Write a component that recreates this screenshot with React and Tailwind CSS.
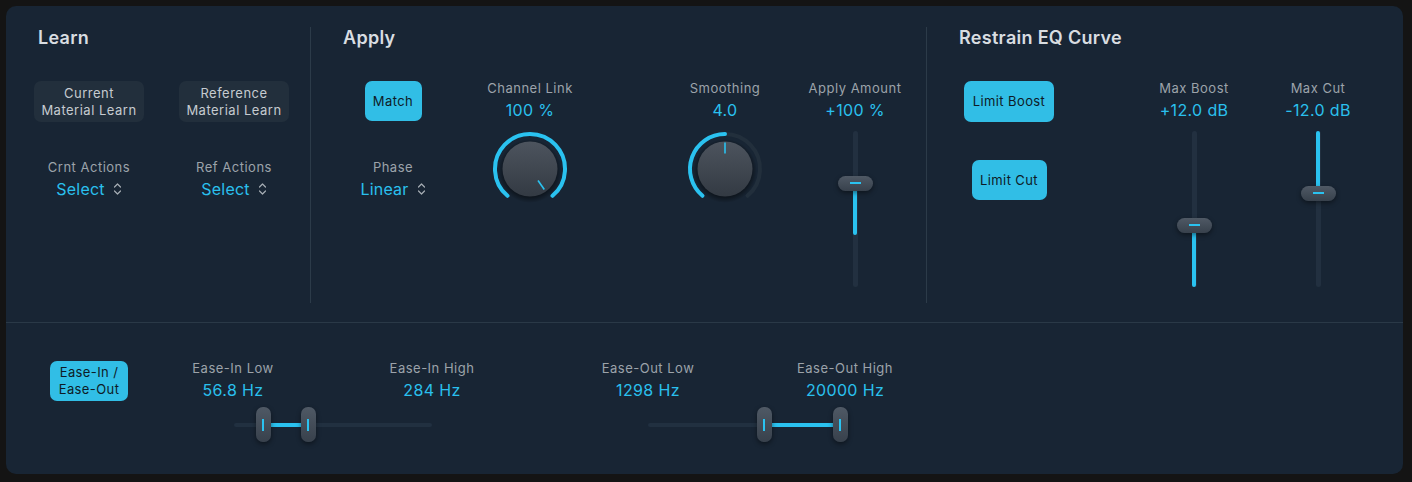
import React from 'react';

const CYAN = '#2ac2f0';

function UpDown() {
  return (
    <svg width="9" height="14" viewBox="0 0 9 14" className="ml-[8px]">
      <path
        d="M1.5 5 L4.5 2 L7.5 5 M1.5 9 L4.5 12 L7.5 9"
        fill="none"
        stroke="#a6adb4"
        strokeWidth="1.2"
        strokeLinecap="round"
        strokeLinejoin="round"
      />
    </svg>
  );
}

function Label({ children }) {
  return (
    <div className="text-[13px] leading-[16px] tracking-[0.5px] text-[#9ca3aa] whitespace-nowrap">{children}</div>
  );
}

function Value({ children }) {
  return (
    <div className="mt-[4px] text-[16px] leading-[20px] tracking-[0.35px] text-[#2ac0ee] whitespace-nowrap">
      {children}
    </div>
  );
}

function SelectValue({ children }) {
  return (
    <div className="mt-[4px] flex items-center text-[16px] leading-[20px] tracking-[0.2px] text-[#2ac0ee]">
      <span>{children}</span>
      <UpDown />
    </div>
  );
}

// rotary knob: arc sweeps from -140deg to +140deg around the top
function Knob({ half }) {
  const arcFull = 'M17.5 66.81 A35 35 0 1 1 62.5 66.81';
  const arcHalf = 'M17.5 66.81 A35 35 0 0 1 40 5';
  return (
    <svg width="80" height="80" viewBox="0 0 80 80">
      <defs>
        <linearGradient id={half ? 'kb2' : 'kb1'} x1="0" y1="0" x2="0" y2="1">
          <stop offset="0" stopColor="#4d545e" />
          <stop offset="1" stopColor="#333a43" />
        </linearGradient>
        <radialGradient id={half ? 'ks2' : 'ks1'} cx="0.5" cy="0.5" r="0.5">
          <stop offset="0.8" stopColor="#000" stopOpacity="0.45" />
          <stop offset="1" stopColor="#000" stopOpacity="0" />
        </radialGradient>
      </defs>
      {half && (
        <path d={arcFull} fill="none" stroke="#222f3c" strokeWidth="4" strokeLinecap="round" />
      )}
      <path d={half ? arcHalf : arcFull} fill="none" stroke={CYAN} strokeWidth="4" strokeLinecap="round" />
      <circle cx="40" cy="42" r="32" fill={`url(#${half ? 'ks2' : 'ks1'})`} />
      <circle cx="40" cy="40" r="27.5" fill={`url(#${half ? 'kb2' : 'kb1'})`} />
      {half ? (
        <line x1="40" y1="13.5" x2="40" y2="24.5" stroke={CYAN} strokeWidth="1.6" />
      ) : (
        <line x1="48" y1="51.5" x2="54.3" y2="60.5" stroke={CYAN} strokeWidth="1.6" />
      )}
    </svg>
  );
}

function HandleH() {
  return (
    <div className="w-[35px] h-[15px] rounded-full bg-gradient-to-b from-[#4f5965] to-[#38414c] shadow-[0_2px_5px_rgba(0,0,0,0.45)] flex items-center justify-center">
      <div className="w-[11px] h-[1.5px] bg-[#2ac2f0]" />
    </div>
  );
}

function HandleV() {
  return (
    <div className="w-[15px] h-[35px] rounded-[7px] bg-gradient-to-b from-[#4f5965] to-[#38414c] shadow-[0_2px_5px_rgba(0,0,0,0.45)] flex items-center justify-center">
      <div className="w-[1.5px] h-[12px] bg-[#2ac2f0]" />
    </div>
  );
}

// vertical fader, 156px tall; pos = handle centre, fill = [from, to]
function VSlider({ pos, from, to }) {
  return (
    <div className="relative w-[35px] h-[156px]">
      <div className="absolute left-[15px] top-0 w-[5px] h-[156px] rounded-full bg-[#223040]" />
      <div
        className="absolute left-[15.5px] w-[4px] rounded-full bg-[#2ac2f0]"
        style={{ top: from, height: to - from }}
      />
      <div className="absolute left-0" style={{ top: pos - 7.5 }}>
        <HandleH />
      </div>
    </div>
  );
}

// horizontal two-handle range
function Range({ w, a, b }) {
  return (
    <div className="relative h-[35px]" style={{ width: w }}>
      <div className="absolute left-0 right-0 top-[15.5px] h-[4px] rounded-full bg-[#213040]" />
      <div className="absolute top-[15.5px] h-[4px] bg-[#2ac2f0]" style={{ left: a, width: b - a }} />
      <div className="absolute top-0" style={{ left: a - 7.5 }}>
        <HandleV />
      </div>
      <div className="absolute top-0" style={{ left: b - 7.5 }}>
        <HandleV />
      </div>
    </div>
  );
}

function Title({ children }) {
  return (
    <div className="text-[18px] leading-[22px] font-semibold tracking-[0.3px] text-[#d9dde1]">{children}</div>
  );
}

const cyanBtn =
  'rounded-[7px] bg-[#31bee6] text-[13px] leading-[17px] tracking-[0.4px] text-[#0e1b26] flex items-center justify-center text-center';
const darkBtn =
  'w-[110px] h-[41px] rounded-[7px] bg-[#222f3c] text-[13px] leading-[17px] tracking-[0.5px] text-[#c6cbd0] flex items-center justify-center text-center';

export default function App() {
  return (
    <div className="w-[1412px] h-[482px] bg-[#141414] pt-[6px] pl-[6px] font-[Inter,sans-serif]">
      <div className="w-[1397px] h-[468px] rounded-[10px] bg-[#182534] flex flex-col overflow-hidden">
        {/* upper controls */}
        <div className="h-[316px] flex pt-[21px] pb-[19px]">
          {/* Learn */}
          <div className="w-[304px] pl-[32px]">
            <Title>Learn</Title>
            <div className="mt-[32px] ml-[-4px] flex gap-[35px]">
              <div className={darkBtn}>
                Current
                <br />
                Material Learn
              </div>
              <div className={darkBtn}>
                Reference
                <br />
                Material Learn
              </div>
            </div>
            <div className="mt-[37px] ml-[-4px] flex gap-[35px]">
              <div className="w-[110px] flex flex-col items-center">
                <Label>Crnt Actions</Label>
                <SelectValue>Select</SelectValue>
              </div>
              <div className="w-[110px] flex flex-col items-center">
                <Label>Ref Actions</Label>
                <SelectValue>Select</SelectValue>
              </div>
            </div>
          </div>

          <div className="w-px bg-[#2c3b49]" />

          {/* Apply */}
          <div className="w-[615px] pl-[32px]">
            <Title>Apply</Title>
            <div className="mt-[31px] flex items-start">
              <div className="w-[100px] flex flex-col items-center">
                <div className={`mt-[1px] w-[57px] h-[40px] ${cyanBtn}`}>Match</div>
                <div className="mt-[38px]">
                  <Label>Phase</Label>
                </div>
                <SelectValue>Linear</SelectValue>
              </div>
              <div className="ml-[27px] w-[120px] flex flex-col items-center">
                <Label>Channel Link</Label>
                <Value>100 %</Value>
                <div className="mt-[9px]">
                  <Knob />
                </div>
              </div>
              <div className="ml-[75px] w-[120px] flex flex-col items-center">
                <Label>Smoothing</Label>
                <Value>4.0</Value>
                <div className="mt-[9px]">
                  <Knob half />
                </div>
              </div>
              <div className="ml-[15px] w-[110px] flex flex-col items-center">
                <Label>Apply Amount</Label>
                <Value>+100 %</Value>
                <div className="mt-[11px]">
                  <VSlider pos={52} from={52} to={104} />
                </div>
              </div>
            </div>
          </div>

          <div className="w-px bg-[#2c3b49]" />

          {/* Restrain EQ Curve */}
          <div className="flex-1 pl-[32px]">
            <Title>Restrain EQ Curve</Title>
            <div className="mt-[31px] flex items-start">
              <div className="w-[100px] flex flex-col items-center">
                <div className={`mt-[1px] w-[90px] h-[41px] ${cyanBtn}`}>Limit Boost</div>
                <div className={`mt-[38px] w-[75px] h-[40px] ${cyanBtn}`}>Limit Cut</div>
              </div>
              <div className="ml-[80px] w-[110px] flex flex-col items-center">
                <Label>Max Boost</Label>
                <Value>+12.0 dB</Value>
                <div className="mt-[11px]">
                  <VSlider pos={94} from={94} to={156} />
                </div>
              </div>
              <div className="ml-[14px] w-[110px] flex flex-col items-center">
                <Label>Max Cut</Label>
                <Value>-12.0 dB</Value>
                <div className="mt-[11px]">
                  <VSlider pos={62} from={0} to={62} />
                </div>
              </div>
            </div>
          </div>
        </div>

        {/* ease-in / ease-out strip */}
        <div className="flex-1 border-t border-[#2a3947] pt-[37px] pl-[44px] flex items-start">
          <div className={`mt-[1px] w-[78px] h-[40px] ${cyanBtn}`}>
            Ease-In /
            <br />
            Ease-Out
          </div>
          <div className="ml-[55px] w-[299px]">
            <div className="flex justify-between">
              <div className="w-[100px] flex flex-col items-center">
                <Label>Ease-In Low</Label>
                <Value>56.8 Hz</Value>
              </div>
              <div className="w-[100px] flex flex-col items-center">
                <Label>Ease-In High</Label>
                <Value>284 Hz</Value>
              </div>
            </div>
            <div className="mt-[7px] ml-[51px]">
              <Range w={198} a={29} b={74} />
            </div>
          </div>
          <div className="ml-[116px] w-[297px]">
            <div className="flex justify-between">
              <div className="w-[100px] flex flex-col items-center">
                <Label>Ease-Out Low</Label>
                <Value>1298 Hz</Value>
              </div>
              <div className="w-[100px] flex flex-col items-center">
                <Label>Ease-Out High</Label>
                <Value>20000 Hz</Value>
              </div>
            </div>
            <div className="mt-[7px] ml-[50px]">
              <Range w={199} a={116} b={192} />
            </div>
          </div>
        </div>
      </div>
    </div>
  );
}
